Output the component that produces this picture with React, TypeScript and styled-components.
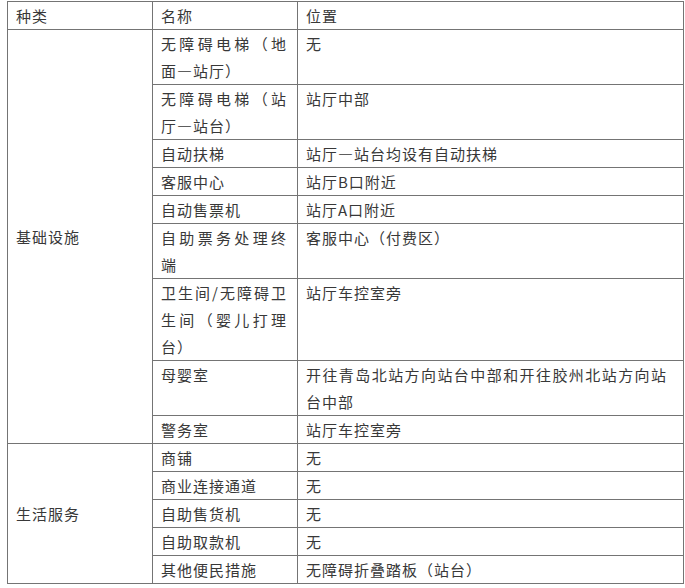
import React from 'react';
import styled, { createGlobalStyle } from 'styled-components';

const GlobalStyle = createGlobalStyle`
  html, body {
    margin: 0;
    padding: 0;
    background: #ffffff;
  }
  body {
    font-family: "Noto Sans CJK SC", "Noto Sans", sans-serif;
  }
`;

const Page = styled.div`
  padding: 1px 0 0 7px;
`;

const Table = styled.table`
  border-collapse: collapse;
  table-layout: fixed;
  width: 676px;
  font-size: 15px;
  letter-spacing: 1px;
  line-height: 27px;
  color: #383838;
`;

const HeadCell = styled.th`
  border: 1px solid #747474;
  padding: 0 8px;
  font-weight: 400;
  text-align: left;
  vertical-align: top;
`;

const Cell = styled.td<{ $padRight?: number }>`
  border: 1px solid #747474;
  padding: 0 ${p => p.$padRight ?? 10}px 0 8px;
  text-align: justify;
  vertical-align: top;
  word-break: break-all;
`;

const CategoryCell = styled.td`
  border: 1px solid #747474;
  padding: 0 8px;
  text-align: left;
  vertical-align: middle;
`;

interface Item {
  name: string;
  place: string;
}

interface Group {
  category: string;
  items: Item[];
}

const groups: Group[] = [
  {
    category: '基础设施',
    items: [
      { name: '无障碍电梯（地面—站厅）', place: '无' },
      { name: '无障碍电梯（站厅—站台）', place: '站厅中部' },
      { name: '自动扶梯', place: '站厅—站台均设有自动扶梯' },
      { name: '客服中心', place: '站厅B口附近' },
      { name: '自动售票机', place: '站厅A口附近' },
      { name: '自助票务处理终端', place: '客服中心（付费区）' },
      { name: '卫生间/无障碍卫生间（婴儿打理台）', place: '站厅车控室旁' },
      { name: '母婴室', place: '开往青岛北站方向站台中部和开往胶州北站方向站台中部' },
      { name: '警务室', place: '站厅车控室旁' },
    ],
  },
  {
    category: '生活服务',
    items: [
      { name: '商铺', place: '无' },
      { name: '商业连接通道', place: '无' },
      { name: '自助售货机', place: '无' },
      { name: '自助取款机', place: '无' },
      { name: '其他便民措施', place: '无障碍折叠踏板（站台）' },
    ],
  },
];

export default function App() {
  return (
    <Page lang="zh-CN">
      <GlobalStyle />
      <Table>
        <colgroup>
          <col style={{ width: 145 }} />
          <col style={{ width: 145 }} />
          <col style={{ width: 386 }} />
        </colgroup>
        <thead>
          <tr>
            <HeadCell>种类</HeadCell>
            <HeadCell>名称</HeadCell>
            <HeadCell>位置</HeadCell>
          </tr>
        </thead>
        <tbody>
          {groups.map(group =>
            group.items.map((item, index) => (
              <tr key={group.category + index}>
                {index === 0 && (
                  <CategoryCell rowSpan={group.items.length}>{group.category}</CategoryCell>
                )}
                <Cell>{item.name}</Cell>
                <Cell $padRight={16}>{item.place}</Cell>
              </tr>
            ))
          )}
        </tbody>
      </Table>
    </Page>
  );
}
